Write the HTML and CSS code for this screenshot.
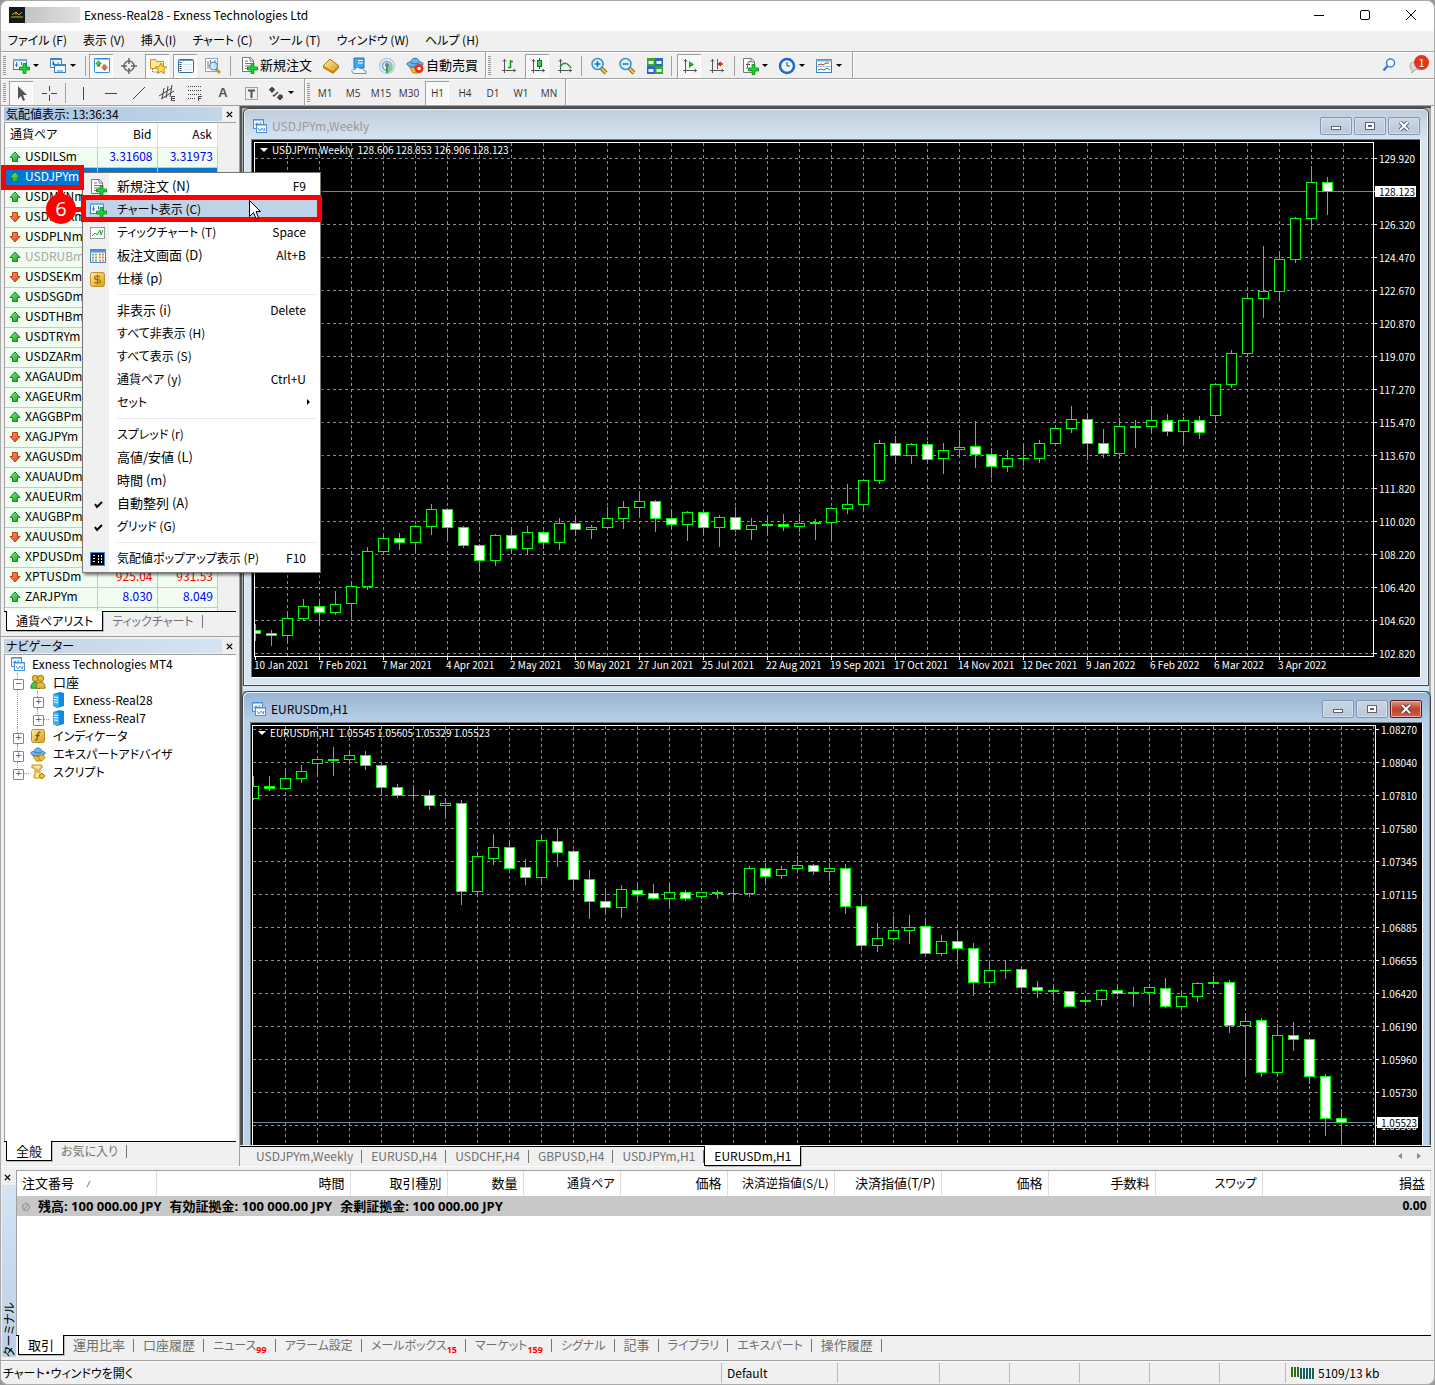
FILE: index.html
```html
<!DOCTYPE html>
<html lang="ja">
<head>
<meta charset="utf-8">
<title>Exness-Real28 - Exness Technologies Ltd</title>
<link rel="stylesheet" href="styles.css">
</head>
<body>
<svg class="defs" aria-hidden="true">
  <defs>
    <linearGradient id="gUp" x1="0" y1="0" x2="1" y2="1"><stop offset="0" stop-color="#8cf08c"/><stop offset="1" stop-color="#0a9a1c"/></linearGradient>
    <linearGradient id="gDown" x1="0" y1="0" x2="1" y2="1"><stop offset="0" stop-color="#ffa277"/><stop offset="1" stop-color="#d63a08"/></linearGradient>
    <linearGradient id="gGold" x1="0" y1="0" x2="1" y2="1"><stop offset="0" stop-color="#fff0a8"/><stop offset="1" stop-color="#d99a12"/></linearGradient>
    <symbol id="up" viewBox="0 0 12 12"><path d="M6 1 11 6.500H8.500V10.500H3.500V6.500H1Z" fill="url(#gUp)" stroke="#16862a"/></symbol>
    <symbol id="down" viewBox="0 0 12 12"><path d="M6 11 11 5.500H8.500V1.500H3.500V5.500H1Z" fill="url(#gDown)" stroke="#b8400f"/></symbol>
    <symbol id="plus" viewBox="0 0 12 12"><path d="M4.500.5h3v4h4v3h-4v4h-3v-4h-4v-3h4Z" fill="#19d832" stroke="#0a8a1a"/></symbol>
    <symbol id="charts" viewBox="0 0 16 16"><rect x="1.500" y="1.500" width="10" height="9" fill="#e8f4ff" stroke="#4a90d9"/><path d="M1 2h11M3 7l2-2 2 2 2-3" stroke="#4a90d9" fill="none"/><rect x="4.500" y="6.500" width="10" height="8" fill="#fff" stroke="#4a90d9"/><path d="M4 7h11M6 10l2 3 2-3 2 3 1-3" stroke="#4a90d9" fill="none"/></symbol>
    <symbol id="newchart" viewBox="0 0 18 18"><rect x="1.500" y="2.500" width="13" height="10" fill="#eef7ff" stroke="#3d83bd"/><path d="M1 3h14" stroke="#69b2e6" stroke-width="2"/><path d="M4.500 5v5M3 8h3M9.500 5v3" stroke="#47749b"/><use href="#plus" x="7" y="6" width="11" height="11"/></symbol>
    <symbol id="doc" viewBox="0 0 18 18"><path d="M2.500 1.500h8l3 3v11h-11Z" fill="#fff" stroke="#777"/><path d="M10 1.500v3.500h3.500M5 5h3M5 7.500h6M5 10h6M5 12.500h3" stroke="#777" fill="none"/><use href="#plus" x="7" y="7" width="11" height="11"/></symbol>
    <symbol id="fdoc" viewBox="0 0 18 18"><path d="M2.500 1.500h8l3 3v11h-11Z" fill="#fff" stroke="#777"/><path d="M10 1.500v3.500h3.500" stroke="#777" fill="none"/><path d="M9.500 4.500Q7.500 4 7 6l-1 6M5 7.500h4" stroke="#555" fill="none"/><use href="#plus" x="7" y="7" width="11" height="11"/></symbol>
    <symbol id="axes" viewBox="0 0 18 18"><path d="M4.500 2v14M2 13.500h14M3 4.500l1.500-2L6 4.500M13.500 12l2 1.500-2 1.500" stroke="#555" fill="none"/></symbol>
    <symbol id="server" viewBox="0 0 14 16"><path d="M2 2 9 0l4 1v13l-7 2-4-2Z" fill="#1688dc"/><path d="M2 2 8 3v13l-6-2Z" fill="#39b2f7"/><path d="M3 5l4 .5M3 7.500l4 .5M3 10l4 .5" stroke="#fff"/></symbol>
    <symbol id="hat" viewBox="0 0 18 18"><path d="M3 10q6 4 12 0l-3 7H7Z" fill="#f1be37" stroke="#b88012"/><path d="M1 8c0-2 3-2 4-2 0-5 8-5 8 0 1 0 4 0 4 2s-4 3-8 3-8-1-8-3Z" fill="#69b7ec" stroke="#2a75b5"/><path d="M5 7q4 2 8 0" stroke="#2a75b5" fill="none"/></symbol>
    <symbol id="expert" viewBox="0 0 18 18"><use href="#hat"/><path d="m13 9 4 4-4 4-4-4Z" fill="#f3bf2a" stroke="#a97707"/></symbol>
    <symbol id="scroll" viewBox="0 0 16 16"><path d="M2 1h10v3h-2v7h3v3H4v-3h1V4H2Z" fill="#ffe58b" stroke="#be9020"/><path d="M6 6h3M6 8h3" stroke="#be9020"/><path d="m12 9 3 3-3 3-3-3Z" fill="#f3bf2a" stroke="#a97707"/></symbol>
    <symbol id="lens" viewBox="0 0 18 18"><path d="m11 11 5 5" stroke="#8b6814" stroke-width="4"/><path d="m11 11 5 5" stroke="#f3cd45" stroke-width="2"/><circle cx="7.500" cy="7" r="5.500" fill="#d9f3ff" stroke="#3890cc" stroke-width="1.500"/></symbol>
    <symbol id="x" viewBox="0 0 8 8"><path d="m1 1 6 6M7 1 1 7" stroke="#000" stroke-width="1.600"/></symbol>
    <pattern id="vgrid" x="32" y="0" width="32" height="6" patternUnits="userSpaceOnUse"><rect width="1" height="3" fill="#8090a0"/></pattern>
    <pattern id="hgrid1" x="0" y="15" width="6" height="33" patternUnits="userSpaceOnUse"><rect width="3" height="1" fill="#8090a0"/></pattern>
    <pattern id="hgrid2" x="0" y="3" width="6" height="33" patternUnits="userSpaceOnUse"><rect width="3" height="1" fill="#8090a0"/></pattern>
  </defs>
</svg>

<div class="app">
  <header class="titlebar">
    <svg class="logo" viewBox="0 0 16 16"><rect width="16" height="16" fill="#171a1c"/><path d="M2 10h12M3 8q2-3 4-2M7 8V5l3 3 3-3" stroke="#d8a928" fill="none"/></svg>
    <span class="masked"></span>
    <h1>Exness-Real28 - Exness Technologies Ltd</h1>
    <div class="win-ctl">
      <button aria-label="最小化"><svg viewBox="0 0 12 12"><path d="M1 6.500h10" stroke="#000"/></svg></button>
      <button aria-label="最大化"><svg viewBox="0 0 12 12"><rect x="1.500" y="1.500" width="9" height="9" rx="1.500" fill="none" stroke="#000"/></svg></button>
      <button aria-label="閉じる"><svg viewBox="0 0 12 12"><path d="m1 1 10 10M11 1 1 11" stroke="#000"/></svg></button>
    </div>
  </header>

  <nav class="menubar">
    <button>ファイル (F)</button><button>表示 (V)</button><button>挿入(I)</button><button>チャート (C)</button><button>ツール (T)</button><button>ウィンドウ (W)</button><button>ヘルプ (H)</button>
  </nav>

  <div class="toolbar tb-main">
    <div class="band">
      <i class="grip"></i>
      <button class="drop" aria-label="新規チャート"><svg class="ic"><use href="#newchart"/></svg></button>
      <button class="drop" aria-label="チャート組表示"><svg class="ic" viewBox="0 0 18 18"><path d="M1.500 1.500h11v9h-11Z" fill="#eef7ff" stroke="#3d83bd"/><path d="M1 2.500h12M4 4v4h2M9 5v3" stroke="#3d83bd"/><rect x="5.500" y="7.500" width="11" height="8" fill="#eef7ff" stroke="#3d83bd"/><path d="M5 8.500h12M8 14h6" stroke="#3d83bd"/></svg></button>
      <i class="sep tight"></i>
      <button class="tool on" aria-label="気配値表示"><svg class="ic" viewBox="0 0 18 18"><rect x="1.500" y="1.500" width="15" height="14" rx="1" fill="#fff" stroke="#2d8de0"/><path d="M1 2h16" stroke="#2d8de0"/><use href="#up" x="2" y="3" width="7" height="7"/><use href="#down" x="8" y="7" width="7" height="7"/></svg></button>
      <button class="tool" aria-label="データウィンドウ"><svg class="ic" viewBox="0 0 18 18"><circle cx="9" cy="9" r="5" fill="none" stroke="#666" stroke-width="1.500"/><path d="M9 1v6M9 11v6M1 9h6M11 9h6" stroke="#666" stroke-width="1.500"/></svg></button>
      <button class="tool on" aria-label="ナビゲーター"><svg class="ic" viewBox="0 0 18 18"><path d="M1.500 2.500h5l1 2h7v7h-13Z" fill="#ffe89a" stroke="#c99a23"/><path d="M3.500 12v3h6" stroke="#666" stroke-dasharray="1 1" fill="none"/><path d="m12 6 1.700 3.600 3.900.4-2.900 2.600.8 3.900-3.500-2-3.500 2 .8-3.900L6.400 10l3.900-.4Z" fill="#ffdb4d" stroke="#b98b14"/></svg></button>
      <button class="tool on" aria-label="ターミナル"><svg class="ic" viewBox="0 0 18 18"><rect x="1.500" y="2.500" width="15" height="13" rx="1" fill="#fff" stroke="#246fb5"/><path d="M1 3.500h16" stroke="#58a3df"/><path d="M3.500 5v9" stroke="#333" stroke-width="2" stroke-dasharray="1 1"/><path d="M6 7.500h9M6 10h9M6 12.500h9" stroke="#cfe2f3"/></svg></button>
      <button class="tool" aria-label="ストラテジーテスター"><svg class="ic" viewBox="0 0 18 18"><rect x="1.500" y="1.500" width="12" height="13" fill="#fff" stroke="#7fa8cb"/><path d="M4 4v8M6.500 3v6M11 3v7" stroke="#777"/><path d="m12 12 4 4" stroke="#c99a23" stroke-width="3"/><circle cx="9.500" cy="9" r="4" fill="#bfe6fa" fill-opacity=".8" stroke="#3f7fb4"/></svg></button>
      <i class="sep wide"></i>
      <button class="text-tool kj"><svg class="ic"><use href="#doc"/></svg>新規注文</button>
      <button class="tool" aria-label="メタエディター"><svg class="ic" viewBox="0 0 18 18"><path d="M1 9 8 2l9 7-6 6Z" fill="url(#gGold)" stroke="#a8730f"/><path d="m1 9 10 6 6-6v2l-6 6L1 11Z" fill="#c8860c"/></svg></button>
      <button class="tool" aria-label="クラウド"><svg class="ic" viewBox="0 0 18 18"><path d="M4 1h10v10H4Z" fill="#3aaef2" stroke="#1478bd"/><path d="M8 3h5v1H8ZM8 5.500h5v1H8Z" fill="#fff"/><path d="M4 16.500q-3-1-2-3 1-2 3-1 2-4 5-1 4-1 4 2 3 0 2 3Z" fill="#f1f6fb" stroke="#6d8fae"/></svg></button>
      <button class="tool" aria-label="シグナル"><svg class="ic" viewBox="0 0 18 18"><circle cx="9" cy="9" r="7.500" fill="none" stroke="#b5cfe3" stroke-width="1.500"/><circle cx="9" cy="9" r="4.500" fill="none" stroke="#7fa4c2" stroke-width="1.500"/><path d="M9 9q5-4 6 0 0 6-6 7Z" fill="#8fc98f"/><circle cx="9" cy="8" r="2" fill="#3f84bd"/><path d="M9 8v8" stroke="#3f9b4f" stroke-width="2"/></svg></button>
      <button class="text-tool kj"><svg class="ic" viewBox="0 0 18 18"><use href="#hat"/><circle cx="13" cy="12.500" r="4.500" fill="#e33318"/><rect x="11.500" y="11" width="3" height="3" fill="#fff"/></svg>自動売買</button>
    </div>
    <div class="band">
      <i class="grip"></i>
      <button class="tool" aria-label="バーチャート"><svg class="ic" viewBox="0 0 18 18"><use href="#axes"/><path d="M10.500 3v8M8 10.500h2.500M10.500 4.500H13" stroke="#0a9a1c" stroke-width="1.500"/></svg></button>
      <button class="tool on" aria-label="ローソク足"><svg class="ic" viewBox="0 0 18 18"><use href="#axes"/><path d="M10.500 1v11" stroke="#087a14"/><rect x="8.500" y="3.500" width="4" height="6" fill="#2fd648" stroke="#087a14"/></svg></button>
      <button class="tool" aria-label="ラインチャート"><svg class="ic" viewBox="0 0 18 18"><use href="#axes"/><path d="M4 10q5-8 11 1" stroke="#2a9a38" stroke-width="1.500" fill="none"/></svg></button>
      <i class="sep"></i>
      <button class="tool" aria-label="拡大"><svg class="ic" viewBox="0 0 18 18"><use href="#lens"/><path d="M4.500 7h6M7.500 4v6" stroke="#2270ab" stroke-width="1.500"/></svg></button>
      <button class="tool" aria-label="縮小"><svg class="ic" viewBox="0 0 18 18"><use href="#lens"/><path d="M4.500 7h6" stroke="#2270ab" stroke-width="1.500"/></svg></button>
      <button class="tool" aria-label="整列"><svg class="ic" viewBox="0 0 18 18"><path d="M1 1h8v8H1ZM9 9h8v8H9Z" fill="#3aa62a"/><path d="M9 1h8v8H9ZM1 9h8v8H1Z" fill="#2a66c8"/><path d="M2.500 4h5v3h-5ZM10.500 4h5v3h-5ZM2.500 12h5v3h-5ZM10.500 12h5v3h-5Z" fill="#e8f3ff"/></svg></button>
      <i class="sep"></i>
      <button class="tool on" aria-label="自動スクロール"><svg class="ic" viewBox="0 0 18 18"><use href="#axes"/><path d="m8 4 5 3.500L8 11Z" fill="#0fae26"/></svg></button>
      <button class="tool" aria-label="チャートシフト"><svg class="ic" viewBox="0 0 18 18"><use href="#axes"/><path d="M9.500 2v10" stroke="#246aa8"/><path d="M15 7h-4M13 5l-2.500 2L13 9" stroke="#b8320e" stroke-width="1.500" fill="none"/></svg></button>
      <i class="sep wide"></i>
      <button class="drop" aria-label="インディケータ"><svg class="ic"><use href="#fdoc"/></svg></button>
      <button class="drop" aria-label="時間軸"><svg class="ic" viewBox="0 0 18 18"><circle cx="9" cy="9" r="7" fill="#eef6ff" stroke="#1c6bc0" stroke-width="2.500"/><path d="M9 5v4h3" stroke="#345" fill="none"/></svg></button>
      <button class="drop" aria-label="テンプレート"><svg class="ic" viewBox="0 0 18 18"><rect x="1.500" y="2.500" width="15" height="13" fill="#fff" stroke="#3d83bd"/><path d="M1 3.500h16" stroke="#69aee2" stroke-width="2"/><path d="m3 8 3-1 2 1 3-2 3 0" stroke="#a8320e" fill="none"/><path d="M2 9.500h14" stroke="#9cc3e2"/><path d="m3 13 3-1 3 1 3-2 3 2" stroke="#1b9a2c" fill="none"/></svg></button>
    </div>
    <div class="tb-right">
      <button class="tool" aria-label="検索"><svg class="ic" viewBox="0 0 18 18"><circle cx="10.500" cy="7" r="4" fill="#fff" stroke="#3b7ad0" stroke-width="1.500"/><path d="m7.500 10-4 4.500" stroke="#3b7ad0" stroke-width="2.500"/></svg></button>
      <button class="tool chat" aria-label="通知"><svg class="ic" viewBox="0 0 18 18"><path d="M2 9q0-3 5-3t6 3-6 5l-3 3v-3q-2-1-2-5Z" fill="#d8d8d8" stroke="#a5a5a5"/></svg><b>1</b></button>
    </div>
  </div>

  <div class="toolbar tb-draw">
    <div class="band">
      <i class="grip"></i>
      <button class="tool on" aria-label="カーソル"><svg class="ic" viewBox="0 0 18 18"><path d="M5 2v13l3-3 2 5 2-1-2-5h4Z" fill="#555"/></svg></button>
      <button class="tool" aria-label="クロスヘア"><svg class="ic" viewBox="0 0 18 18"><path d="M9.500 2v5M9.500 11v6M2 9.500h5M11 9.500h6" stroke="#444"/></svg></button>
      <i class="sep"></i>
      <button class="tool" aria-label="垂直線"><svg class="ic" viewBox="0 0 18 18"><path d="M9.500 3v13" stroke="#444"/></svg></button>
      <button class="tool" aria-label="水平線"><svg class="ic" viewBox="0 0 18 18"><path d="M3 9.500h12" stroke="#444"/></svg></button>
      <button class="tool" aria-label="トレンドライン"><svg class="ic" viewBox="0 0 18 18"><path d="M3 15 15 3" stroke="#444"/></svg></button>
      <button class="tool" aria-label="チャネル"><svg class="ic" viewBox="0 0 18 18"><path d="m1 12 13-8M3 15l13-8M6 4 4 15M10 2 8 14M14 1l-2 12" stroke="#444"/><path d="M17 12.500h-3.500v4H17M14 14.500h3" stroke="#444" fill="none"/></svg></button>
      <button class="tool" aria-label="フィボナッチ"><svg class="ic" viewBox="0 0 18 18"><path d="M2 2.500h13M2 6.500h13M2 10.500h13M2 14.500h8" stroke="#444" stroke-dasharray="1 1"/><path d="M12.500 17v-4.500H16M12 14.500h3" stroke="#444" fill="none"/></svg></button>
      <button class="tool glyph" aria-label="テキスト">A</button>
      <button class="tool" aria-label="ラベル"><svg class="ic" viewBox="0 0 18 18"><rect x="3.500" y="3.500" width="12" height="12" fill="none" stroke="#555" stroke-dasharray="1 1"/><path d="M6 6.500h7M9.500 6v8" stroke="#555" stroke-width="2"/></svg></button>
      <button class="drop" aria-label="矢印"><svg class="ic" viewBox="0 0 18 18"><path d="m5 3 3 3H6v2H4V6H2ZM13 16l-3-3h2v-2h3v2h1Z" fill="#444" stroke="#444"/><path d="m6 11 1 1 4-4" stroke="#444" stroke-width="1.500" fill="none"/></svg></button>
    </div>
    <div class="band periods">
      <i class="grip"></i>
      <button class="tool">M1</button><button class="tool">M5</button><button class="tool">M15</button><button class="tool">M30</button><button class="tool on">H1</button><button class="tool">H4</button><button class="tool">D1</button><button class="tool">W1</button><button class="tool">MN</button>
    </div>
  </div>

  <main class="work">
    <aside class="side">
      <section class="panel watch">
        <div class="panel-head"><h2>気配値表示: 13:36:34</h2><button aria-label="閉じる"><svg><use href="#x"/></svg></button></div>
        <div class="watch-body">
          <table class="quotes">
            <thead><tr><th>通貨ペア</th><th>Bid</th><th>Ask</th></tr></thead>
            <tbody>
              <tr><td><svg><use href="#up"/></svg>USDILSm</td><td>3.31608</td><td>3.31973</td></tr>
              <tr class="sel"><td><svg><use href="#up"/></svg>USDJPYm</td><td></td><td></td></tr>
              <tr><td><svg><use href="#up"/></svg>USDMXNm</td><td></td><td></td></tr>
              <tr><td><svg><use href="#down"/></svg>USDNOKm</td><td></td><td></td></tr>
              <tr><td><svg><use href="#down"/></svg>USDPLNm</td><td></td><td></td></tr>
              <tr class="dim"><td><svg><use href="#up"/></svg>USDRUBm</td><td></td><td></td></tr>
              <tr><td><svg><use href="#down"/></svg>USDSEKm</td><td></td><td></td></tr>
              <tr><td><svg><use href="#up"/></svg>USDSGDm</td><td></td><td></td></tr>
              <tr><td><svg><use href="#up"/></svg>USDTHBm</td><td></td><td></td></tr>
              <tr><td><svg><use href="#up"/></svg>USDTRYm</td><td></td><td></td></tr>
              <tr><td><svg><use href="#up"/></svg>USDZARm</td><td></td><td></td></tr>
              <tr><td><svg><use href="#up"/></svg>XAGAUDm</td><td></td><td></td></tr>
              <tr><td><svg><use href="#up"/></svg>XAGEURm</td><td></td><td></td></tr>
              <tr><td><svg><use href="#up"/></svg>XAGGBPm</td><td></td><td></td></tr>
              <tr><td><svg><use href="#down"/></svg>XAGJPYm</td><td></td><td></td></tr>
              <tr><td><svg><use href="#down"/></svg>XAGUSDm</td><td></td><td></td></tr>
              <tr><td><svg><use href="#up"/></svg>XAUAUDm</td><td></td><td></td></tr>
              <tr><td><svg><use href="#up"/></svg>XAUEURm</td><td></td><td></td></tr>
              <tr><td><svg><use href="#up"/></svg>XAUGBPm</td><td></td><td></td></tr>
              <tr><td><svg><use href="#down"/></svg>XAUUSDm</td><td></td><td></td></tr>
              <tr><td><svg><use href="#up"/></svg>XPDUSDm</td><td></td><td></td></tr>
              <tr class="fall"><td><svg><use href="#down"/></svg>XPTUSDm</td><td>925.04</td><td>931.53</td></tr>
              <tr><td><svg><use href="#up"/></svg>ZARJPYm</td><td>8.030</td><td>8.049</td></tr>
              <tr><td></td><td></td><td></td></tr>
            </tbody>
          </table>
        </div>
        <div class="tabs"><button class="cur">通貨ペアリスト</button><button>ティックチャート</button></div>
      </section>
      <section class="panel navi">
        <div class="panel-head"><h2>ナビゲーター</h2><button aria-label="閉じる"><svg><use href="#x"/></svg></button></div>
        <ul class="tree">
          <li class="root"><svg class="ti"><use href="#charts"/></svg>Exness Technologies MT4
            <ul>
              <li class="open"><svg class="ti" viewBox="0 0 18 18"><circle cx="6" cy="5" r="3.500" fill="#e7b93b" stroke="#8d6a10"/><circle cx="12" cy="5" r="3.500" fill="#e7b93b" stroke="#8d6a10"/><path d="M1 16q0-7 5-7t5 7Z" fill="#3fca43" stroke="#19831f"/><path d="M7 16q0-7 5-7t5 7Z" fill="#e7b93b" stroke="#8d6a10"/></svg><span class="kj">口座</span>
                <ul>
                  <li><svg class="ti"><use href="#server"/></svg>Exness-Real28</li>
                  <li><svg class="ti"><use href="#server"/></svg>Exness-Real7</li>
                </ul>
              </li>
              <li><svg class="ti" viewBox="0 0 16 16"><rect x="1.500" y="1.500" width="13" height="13" rx="2" fill="url(#gGold)" stroke="#c38f1c"/><path d="M10.500 4.500Q8.500 3.500 8 6L7 11q-.5 1.500-2 1M5.500 7.500h4" stroke="#7a5600" stroke-width="1.300" fill="none"/></svg>インディケータ</li>
              <li><svg class="ti"><use href="#expert"/></svg>エキスパートアドバイザ</li>
              <li><svg class="ti"><use href="#scroll"/></svg>スクリプト</li>
            </ul>
          </li>
        </ul>
        <div class="tabs"><button class="cur kj">全般</button><button>お気に入り</button></div>
      </section>
    </aside>

    <div class="mdi">
      <div class="mdi-area">
        <section class="win w-weekly">
          <div class="win-head"><svg class="ti"><use href="#charts"/></svg><h2>USDJPYm,Weekly</h2>
            <div class="caps"><button aria-label="最小化"><i class="c-min"></i></button><button aria-label="最大化"><i class="c-max"></i></button><button aria-label="閉じる"><svg viewBox="0 0 12 10"><path d="m2 1 8 8M10 1 2 9" stroke="#5a6270" stroke-width="4"/><path d="m2 1 8 8M10 1 2 9" stroke="#fff" stroke-width="2"/></svg></button></div>
          </div>
          <div class="chart">
            <div class="plot"><svg id="weekly"></svg><p class="info"><i></i>USDJPYm,Weekly&nbsp; 128.606 128.853 126.906 128.123</p></div>
            <ol class="prices">
              <li>129.920</li><li class="now">128.123</li><li>126.320</li><li>124.470</li><li>122.670</li><li>120.870</li><li>119.070</li><li>117.270</li><li>115.470</li><li>113.670</li><li>111.820</li><li>110.020</li><li>108.220</li><li>106.420</li><li>104.620</li><li>102.820</li>
            </ol>
            <ol class="dates">
              <li>10 Jan 2021</li><li>7 Feb 2021</li><li>7 Mar 2021</li><li>4 Apr 2021</li><li>2 May 2021</li><li>30 May 2021</li><li>27 Jun 2021</li><li>25 Jul 2021</li><li>22 Aug 2021</li><li>19 Sep 2021</li><li>17 Oct 2021</li><li>14 Nov 2021</li><li>12 Dec 2021</li><li>9 Jan 2022</li><li>6 Feb 2022</li><li>6 Mar 2022</li><li>3 Apr 2022</li>
            </ol>
          </div>
        </section>
        <section class="win w-hourly">
          <div class="win-head"><svg class="ti"><use href="#charts"/></svg><h2>EURUSDm,H1</h2>
            <div class="caps"><button aria-label="最小化"><i class="c-min"></i></button><button aria-label="最大化"><i class="c-max"></i></button><button class="close" aria-label="閉じる"><svg viewBox="0 0 12 10"><path d="m2 1 8 8M10 1 2 9" stroke="#5a3a40" stroke-width="4"/><path d="m2 1 8 8M10 1 2 9" stroke="#fff" stroke-width="2"/></svg></button></div>
          </div>
          <div class="chart">
            <div class="plot"><svg id="hourly"></svg><p class="info"><i></i>EURUSDm,H1&nbsp; 1.05545 1.05605 1.05329 1.05523</p></div>
            <ol class="prices">
              <li>1.08270</li><li>1.08040</li><li>1.07810</li><li>1.07580</li><li>1.07345</li><li>1.07115</li><li>1.06885</li><li>1.06655</li><li>1.06420</li><li>1.06190</li><li>1.05960</li><li>1.05730</li><li>1.05500<b class="bid">1.05523</b></li>
            </ol>
          </div>
        </section>
      </div>
      <div class="tabs mdi-tabs">
        <button>USDJPYm,Weekly</button><button>EURUSD,H4</button><button>USDCHF,H4</button><button>GBPUSD,H4</button><button>USDJPYm,H1</button><button class="cur">EURUSDm,H1</button>
        <span class="arrows"><button aria-label="前へ"><svg viewBox="0 0 4 6"><path d="M4 0v6L0 3Z" fill="#888"/></svg></button><button aria-label="次へ"><svg viewBox="0 0 4 6"><path d="M0 0v6l4-3Z" fill="#888"/></svg></button></span>
      </div>
    </div>
  </main>

  <section class="terminal">
    <div class="strip"><button aria-label="閉じる"><svg><use href="#x"/></svg></button><h2>ターミナル</h2></div>
    <div class="term-main">
      <div class="term-body">
        <table class="orders">
          <colgroup><col class="k139"><col class="k194"><col class="k97"><col class="k76"><col class="k97"><col class="k107"><col class="k107"><col class="k107"><col class="k107"><col class="k107"><col class="k107"><col></colgroup>
          <thead><tr><th class="kj">注文番号<svg class="sort" viewBox="0 0 6 8"><path d="M1 7 4 1" stroke="#777"/></svg></th><th class="kj">時間</th><th class="kj">取引種別</th><th class="kj">数量</th><th>通貨ペア</th><th class="kj">価格</th><th>決済逆指値(S/L)</th><th class="kj">決済指値(T/P)</th><th class="kj">価格</th><th class="kj">手数料</th><th>スワップ</th><th class="kj">損益</th></tr></thead>
          <tbody><tr><td colspan="11"><svg class="bal" viewBox="0 0 10 10"><circle cx="5" cy="5" r="3.500" fill="none" stroke="#888"/><path d="m3 7 4-4" stroke="#888"/></svg><span>残高: 100 000.00 JPY</span><span>有効証拠金: 100 000.00 JPY</span><span>余剰証拠金: 100 000.00 JPY</span></td><td class="sum">0.00</td></tr></tbody>
        </table>
      </div>
      <div class="tabs"><button class="cur kj">取引</button><button class="kj">運用比率</button><button class="kj">口座履歴</button><button>ニュース<sub>99</sub></button><button>アラーム設定</button><button>メールボックス<sub>15</sub></button><button>マーケット<sub>159</sub></button><button>シグナル</button><button class="kj">記事</button><button>ライブラリ</button><button>エキスパート</button><button class="kj">操作履歴</button></div>
    </div>
  </section>

  <footer class="status">
    <span class="grow">チャート・ウィンドウを開く</span><span class="s116">Default</span><span class="s102"></span><span class="s70"></span><span class="s70"></span><span class="s70"></span><span class="s70"></span><span class="s66"></span>
    <span class="net"><svg viewBox="0 0 24 12"><path d="M1 0v10M4 0v10M7 0v10" stroke="#2f6b1a" stroke-width="2"/><path d="M10 1v11M13 1v11M16 1v11M19 1v11M22 1v11" stroke="#1a5f5f" stroke-width="2"/></svg>5109/13 kb</span>
  </footer>

  <menu class="context">
    <li><button class="kj"><svg class="ic"><use href="#doc"/></svg><span>新規注文 (N)</span><kbd>F9</kbd></button></li>
    <li><button class="hot"><svg class="ic"><use href="#newchart"/></svg><span>チャート表示 (C)</span></button></li>
    <li><button><svg class="ic" viewBox="0 0 18 18"><rect x="1.500" y="3.500" width="14" height="11" fill="#fff" stroke="#999"/><path d="m3 12 3-3 2 2 3-5 1 5 2-5" stroke="#2a9a38" fill="none"/></svg><span>ティックチャート (T)</span><kbd>Space</kbd></button></li>
    <li><button class="kj"><svg class="ic" viewBox="0 0 18 18"><rect x="1.500" y="2.500" width="15" height="13" fill="#fff" stroke="#4285c6"/><path d="M1 4h16" stroke="#4a94dd" stroke-width="3"/><path d="M3 7.500h6M3 10.500h6M3 13.500h6" stroke="#7fb55e" stroke-width="2" stroke-dasharray="2 1"/><path d="M10 7.500h6M10 10.500h6M10 13.500h6" stroke="#e0885a" stroke-width="2" stroke-dasharray="2 1"/></svg><span>板注文画面 (D)</span><kbd>Alt+B</kbd></button></li>
    <li><button class="kj"><svg class="ic" viewBox="0 0 18 18"><rect x="1.500" y="2.500" width="14" height="14" rx="2" fill="url(#gGold)" stroke="#c38f1c"/><path d="M11 7q-1-1-3-1-2.500 0-2.500 1.700T8.500 9.500 11.300 11.300 8.500 13 5.500 12M8.500 4.500v10" stroke="#9a6b00" stroke-width="1.200" fill="none"/></svg><span>仕様 (p)</span></button></li>
    <li class="rule"></li>
    <li><button class="kj"><span>非表示 (i)</span><kbd>Delete</kbd></button></li>
    <li><button><span>すべて非表示 (H)</span></button></li>
    <li><button><span>すべて表示 (S)</span></button></li>
    <li><button><span>通貨ペア (y)</span><kbd>Ctrl+U</kbd></button></li>
    <li><button class="sub"><span>セット</span></button></li>
    <li class="rule"></li>
    <li><button><span>スプレッド (r)</span></button></li>
    <li><button class="kj"><span>高値/安値 (L)</span></button></li>
    <li><button class="kj"><span>時間 (m)</span></button></li>
    <li><button class="kj"><svg class="ic" viewBox="0 0 18 18"><path d="m6 9 2 3 5-5" stroke="#000" stroke-width="2" fill="none"/></svg><span>自動整列 (A)</span></button></li>
    <li><button><svg class="ic" viewBox="0 0 18 18"><path d="m6 9 2 3 5-5" stroke="#000" stroke-width="2" fill="none"/></svg><span>グリッド (G)</span></button></li>
    <li class="rule"></li>
    <li><button><svg class="ic" viewBox="0 0 18 18"><rect x="1.500" y="2.500" width="14" height="13" fill="#000" stroke="#4285c6"/><path d="M4 5.500h3M4 8.500h2M4 11.500h3M9.500 5v8M12.500 5v8" stroke="#fff" stroke-dasharray="2 1"/></svg><span>気配値ポップアップ表示 (P)</span><kbd>F10</kbd></button></li>
  </menu>
  <i class="mark mark-row"></i>
  <i class="mark mark-item"></i>
  <i class="mark mark-stem"></i>
  <b class="step">6</b>
  <svg class="pointer" viewBox="0 0 12 20"><path d="M.5.500v16l4-4 2.500 6 2.500-1-2.500-6h4.500Z" fill="#fff" stroke="#000"/></svg>
</div>
<script src="charts.js"></script>
</body>
</html>
```
FILE: styles.css
```css
* { box-sizing: border-box; }
body { margin: 0; background: #999; color: #000; font: 12px/16px "Noto Sans CJK JP", sans-serif; font-feature-settings: "palt"; }
button { font: inherit; font-feature-settings: inherit; color: inherit; background: none; border: 0; padding: 0; margin: 0; white-space: nowrap; }
h1, h2, p, ul, ol, menu { margin: 0; padding: 0; font-size: inherit; font-weight: 400; list-style: none; }
i, kbd { font: inherit; }
svg { display: block; flex: none; }
.defs { position: absolute; width: 0; height: 0; }
.kj { font-size: 13px; }
.ic { width: 18px; height: 18px; }
.ti { width: 16px; height: 16px; }

.app { position: relative; display: flex; flex-direction: column; height: 100vh; min-height: 1100px; background: #f0f0f0; border: 1px solid #aaa; border-radius: 8px; overflow: hidden; }

.titlebar { display: flex; align-items: center; height: 30px; padding: 0 0 2px 8px; background: #fff; }
.logo { width: 16px; height: 16px; }
.masked { width: 55px; height: 16px; margin-right: 4px; background: linear-gradient(100deg, #c2c4c4, #dfe0e0); }
.win-ctl { display: flex; margin-left: auto; }
.win-ctl button { width: 46px; height: 28px; display: grid; place-items: center; }
.win-ctl svg { width: 12px; height: 12px; }

.menubar { display: flex; gap: 16px; height: 20px; padding: 0 7px; line-height: 18px; }
.menubar button { height: 18px; }

.toolbar { display: flex; height: 27px; border-top: 1px solid #a0a0a0; box-shadow: inset 0 1px #fff; }
.tb-draw { height: 28px; border-bottom: 1px solid #a0a0a0; }
.band { display: flex; align-items: center; padding: 1px 2px 0 2px; border-right: 1px solid #a0a0a0; box-shadow: 1px 0 #fff; }
.grip { width: 3px; height: 20px; margin-right: 4px; background: repeating-linear-gradient(#999 0 1px, #f0f0f0 1px 2px); }
.tb-draw .grip { margin-right: 1px; }
.sep { width: 1px; height: 20px; margin: 0 3px 0 2px; background: #a0a0a0; }
.sep.tight { margin: 0 1px; }
.sep.wide { margin: 0 4px 0 3px; }
.tool { width: 28px; height: 24px; display: grid; place-items: center; }
.tool.on { background: #f8f8f8; border: solid #a0a0a0; border-width: 1px 0 0 1px; width: 24px; margin: 0 2px; box-shadow: inset -1px -1px #fff; }
.drop { display: flex; align-items: center; gap: 3px; width: 37px; height: 24px; padding-left: 2px; }
.drop::after { content: ""; border: 3px solid transparent; border-top-color: #000; border-bottom: 0; }
.text-tool { display: flex; align-items: center; height: 24px; padding: 0 5px 2px 5px; gap: 2px; }
.glyph { font: bold 13px "Liberation Sans", sans-serif; color: #555; }
.periods .tool { font: 10px "Open Sans", sans-serif; color: #333; }
.tb-right { display: flex; align-items: center; margin-left: auto; padding-right: 3px; }
.chat { position: relative; }
.chat b { position: absolute; right: 2px; top: 2px; width: 15px; height: 15px; border-radius: 8px; background: #e2361c; color: #fff; font-size: 11px; line-height: 14px; font-weight: 400; }

.work { display: flex; flex: 1; min-height: 0; }
.side { display: flex; flex-direction: column; width: 239px; border-right: 1px solid #a0a0a0; }
.panel { display: flex; flex-direction: column; padding: 0 3px; }
.watch { height: 531px; border-bottom: 1px solid #a0a0a0; }
.navi { flex: 1; min-height: 0; padding-top: 1px; padding-bottom: 3px; }
.panel-head { display: flex; align-items: center; height: 16px; }
.panel-head h2 { flex: 1; height: 14px; line-height: 13px; padding-left: 2px; background: linear-gradient(90deg, #a8c5e3, #c3d6e9); white-space: nowrap; }
.navi h2 { background: linear-gradient(90deg, #c3d3e2, #d5e4f2); }
.panel-head button { width: 14px; padding-left: 4px; }
.panel-head svg, .strip svg { width: 7px; height: 7px; }
.watch-body { flex: 1; min-height: 0; overflow: hidden; border: solid #a0a0a0; border-width: 1px 0 0 1px; }
.quotes { width: 213px; table-layout: fixed; border-collapse: collapse; background: #f1fdf1; }
.quotes th { height: 24px; padding: 0 5px 2px; background: #fff; font-weight: 400; text-align: right; border: solid #e0e0e0; border-width: 0 1px 1px 0; }
.quotes th:first-child { width: 92px; text-align: left; }
.quotes th:nth-child(2) { width: 60px; }
.quotes td { height: 20px; padding: 0 4px 2px 0; border: solid #c8c8c8; border-width: 0 1px 1px 0; text-align: right; color: #00f; white-space: nowrap; overflow: hidden; line-height: 16px; }
.quotes td:first-child { padding-left: 4px; text-align: left; color: #000; }
.quotes td svg { display: inline-block; width: 12px; height: 12px; margin-right: 4px; vertical-align: -2px; }
.quotes .sel td, .quotes .sel td:first-child { background: #0078d7; color: #fff; }
.quotes .dim td:first-child { color: #a8a8a8; }
.quotes .fall td:not(:first-child) { color: #f00; }

.tabs { display: flex; height: 22px; color: #707070; box-shadow: inset 0 1px #000; padding-left: 2px; }
.tabs button { position: relative; height: 20px; padding: 0 9px; line-height: 16px; }
.tabs button::after { content: ""; position: absolute; right: 0; top: 4px; width: 1px; height: 13px; background: #777; }
.tabs .cur { background: #fff; color: #000; border: solid #000; border-width: 0 1px 1px; box-shadow: 1px 1px #bbb; }
.tabs .cur::after { display: none; }
.tabs sub { color: #f00; font: bold 9px/9px "Open Sans", sans-serif; vertical-align: -3px; }
.watch .tabs { height: 25px; }
.watch .tabs button { line-height: 18px; }
.term-main .tabs { height: 25px; }

.tree { flex: 1; min-height: 0; overflow: hidden; background: #fff; border: solid #a0a0a0; border-width: 1px 0 0 1px; padding-left: 5px; line-height: 18px; }
.tree li { position: relative; }
.tree .ti { float: left; margin: 1px 6px 1px 0; }
.tree ul { clear: both; }
.tree ul .ti { margin-right: 7px; }
.tree ul li { padding-left: 20px; }
.tree ul li::before { content: "+"; position: absolute; left: 3px; top: 6px; width: 9px; height: 9px; border: 1px solid #848484; border-radius: 1px; background: #fff; color: #33589b; font: 9px/7px "DejaVu Sans", sans-serif; text-align: center; z-index: 1; }
.tree ul li.open::before { content: "−"; }
.tree ul li::after { content: ""; position: absolute; left: 7px; top: 0; width: 11px; height: 10px; border: dotted #999; border-width: 0 0 1px 1px; }
.tree ul > li:not(:last-child)::after { bottom: 0; height: auto; border-bottom: 0; }

.mdi { display: flex; flex-direction: column; flex: 1; min-width: 0; padding-right: 3px; }
.mdi-area { display: flex; flex-direction: column; flex: 1; min-height: 0; overflow: hidden; background: #ababab; border: solid #555; border-width: 2px 0 0 2px; }
.win { display: flex; flex-direction: column; border: 1px solid #444; border-radius: 6px 6px 0 0; min-height: 0; }
.w-weekly { flex: none; margin: 0 2px 5px 1px; padding: 0 8px 8px 7px; background: linear-gradient(#bfccd9, #d7e4f2 32px); box-shadow: 0 5px #d7e4f2, inset 0 0 0 1px #eef4fa; }
.w-hourly { flex: 1; border-bottom: 0; padding: 0 8px 0 7px; background: linear-gradient(#99b4d1, #b9d1ea 32px); box-shadow: inset -1px 0 #39bfe8, inset 1px 1px #e6f0fa; }
.win-head { display: flex; align-items: center; flex: none; height: 30px; padding: 4px 0 0 1px; gap: 4px; }
.w-weekly h2 { color: #9a9a9a; }
.caps { display: flex; gap: 2px; margin-left: auto; }
.caps button { width: 32px; height: 18px; display: grid; place-items: center; border: 1px solid #8294b0; border-radius: 2px; box-shadow: inset 0 0 0 1px #d5e0ec; background: linear-gradient(#c9d6e4, #b9c9da); }
.caps svg { width: 12px; height: 10px; }
.c-min { width: 10px; height: 4px; margin-top: 4px; background: #fff; border: 1px solid #5a6270; }
.c-max { width: 10px; height: 8px; background: #fff; border: 1px solid #5a6270; box-shadow: inset 0 0 0 2px #fff, inset 0 0 0 4px #5a6270; }
.caps .close { background: linear-gradient(#e09a8c, #c0402c 50%, #d06048); border-color: #5a1a20; box-shadow: inset 0 0 0 1px #e8b0a6; }

.chart { display: grid; grid-template-columns: 1fr 46px; flex: 1; min-height: 0; background: #000; color: #fff; border: solid #777; border-width: 1px 0 0 1px; padding: 2px 0 0 2px; box-shadow: 1px 1px #fff; font-size: 10px; }
.w-weekly .chart { grid-template-rows: 515px 20px; }
.w-hourly .chart { padding-left: 1px; }
.plot { position: relative; min-width: 0; overflow: hidden; border: solid #fff; border-width: 1px 1px 0; }
.plot svg { position: absolute; inset: 0; width: 100%; height: 100%; }
.w-weekly .plot { border-bottom-width: 1px; }
.info { position: absolute; left: 5px; top: 0; display: flex; align-items: center; gap: 4px; line-height: 14px; white-space: nowrap; }
.info i { border: 4px solid transparent; border-top-color: #fff; border-bottom: 0; }
.prices { grid-row: 1 / -1; grid-column: 2; }
.prices li { position: relative; height: 33px; line-height: 33px; padding-left: 5px; }
.prices li::before { content: ""; position: absolute; left: 0; top: 16px; width: 3px; height: 1px; background: #fff; }
.w-hourly .prices li:first-child { height: 21px; line-height: 9px; }
.w-hourly .prices li:first-child::before { top: 4px; }
.prices .now { color: #000; background: linear-gradient(#fff, #fff) 1px 11px / 41px 11px no-repeat; }
.bid { position: absolute; left: 1px; top: 8px; width: 41px; height: 11px; padding-left: 4px; line-height: 11px; font-weight: 400; background: #fff; color: #000; }
.dates { display: flex; grid-column: 1; min-width: 0; overflow: visible; line-height: 16px; }
.dates li { flex: none; width: 64px; white-space: nowrap; background: linear-gradient(#fff, #fff) 1px 0 / 1px 3px no-repeat; }

.mdi-tabs { height: 20px; margin-top: 1px; padding-left: 7px; }
.mdi-tabs button { line-height: 18px; }
.arrows { display: flex; margin-left: auto; }
.arrows button { padding: 0 5px; width: 19px; }
.arrows button::after { display: none; }
.arrows svg { width: 4px; height: 6px; }

.terminal { display: flex; flex: none; height: 194px; padding: 3px 3px 0 1px; border-top: 1px solid #fff; }
.strip { display: flex; flex-direction: column; width: 14px; padding-bottom: 3px; }
.strip button { height: 15px; padding-left: 2px; }
.strip h2 { flex: 1; writing-mode: vertical-rl; text-orientation: sideways; transform: rotate(180deg); line-height: 14px; background: linear-gradient(#bccfe3, #d4e4f3); }
.term-main { display: flex; flex-direction: column; flex: 1; min-width: 0; }
.term-body { flex: 1; background: #fff; border: solid #a0a0a0; border-width: 1px 0 0 1px; overflow: hidden; }
.orders { width: 100%; table-layout: fixed; border-collapse: collapse; }
.orders th { height: 25px; padding: 0 5px 2px; font-weight: 400; text-align: right; border-right: 1px solid #dedede; white-space: nowrap; }
.orders th:first-child { text-align: left; }
.sort { display: inline-block; width: 6px; height: 8px; margin-left: 12px; }
.orders td { height: 20px; padding: 0 4px; background: #c8c8c8; font: bold 13px/18px "Open Sans", "Noto Sans CJK JP", sans-serif; text-align: right; }
.orders td:first-child { text-align: left; }
.orders .sum { font-size: 12px; }
.orders span { margin-right: 8px; }
.bal { display: inline-block; width: 10px; height: 10px; margin-right: 7px; vertical-align: -1px; }
.k139 { width: 139px; } .k194 { width: 194px; } .k97 { width: 97px; } .k76 { width: 76px; } .k107 { width: 107px; }

.status { display: flex; align-items: center; flex: none; height: 24px; border-top: 1px solid #a0a0a0; box-shadow: inset 0 1px #fff; }
.status span { height: 20px; line-height: 20px; padding-left: 5px; border-left: 1px solid #bbb; }
.status .grow { flex: 1; padding-left: 2px; border-left: 0; }
.s116 { width: 116px; } .s102 { width: 102px; } .s70 { width: 70px; } .s66 { width: 66px; }
.status .net { display: flex; align-items: center; gap: 3px; width: 149px; }
.net svg { width: 24px; height: 12px; }

.context { position: absolute; left: 81px; top: 171px; width: 239px; padding: 2px 1px; border: 1px solid #777; background: linear-gradient(90deg, #f0f0f0 26px, #fff 26px); box-shadow: 2px 2px 3px #0008; }
.context button { display: flex; align-items: center; width: 100%; height: 23px; padding: 0 13px 2px 33px; text-align: left; }
.context .ic { margin: 2px 10px 0 -28px; }
.context kbd { margin-left: auto; font-size: 12px; }
.context .hot { background: #bfd3e8; }
.context .sub::after { content: ""; margin-left: auto; margin-right: -4px; border: 3px solid transparent; border-left-color: #000; border-right: 0; }
.context .rule { height: 9px; background: linear-gradient(#e8e8e8, #e8e8e8) 33px 4px / 200px 1px no-repeat; }

.mark { position: absolute; border: 5px solid #f00; }
.mark-row { left: 0; top: 164px; width: 83px; height: 25px; }
.mark-item { left: 80px; top: 194px; width: 241px; height: 27px; }
.mark-stem { left: 57px; top: 188px; width: 24px; height: 23px; border-width: 0 0 5px 5px; }
.step { position: absolute; left: 45px; top: 193px; width: 30px; height: 30px; border-radius: 15px; background: #f00; color: #fff; font: 20px/30px "Open Sans", sans-serif; text-align: center; }
.pointer { position: absolute; left: 248px; top: 199px; width: 12px; height: 20px; }
```
FILE: charts.js
```js
// One candle per entry, 16px apart: [high, top, bottom, low, kind], measured in pixels down the window.
// kind: 1 = bearish (filled white), 0 = bullish (hollow), 2 = doji.
const weekly = [
  [624,630,633,640,1],[630,633,635,645,1],[614,618,635,641,0],[599,606,618,620,0],[601,606,612,625,1],[591,604,612,614,0],[581,586,603,616,0],[547,551,586,589,0],
  [536,538,551,554,0],[533,538,542,549,1],[525,526,542,552,0],[504,509,526,534,0],[508,509,527,541,1],[526,527,545,547,1],[544,545,560,570,1],[534,535,560,565,0],
  [527,535,548,553,1],[526,532,548,553,0],[531,532,542,548,1],[518,523,542,549,0],[516,523,529,535,1],[525,527,529,538,0],[507,518,527,529,0],[501,507,518,528,0],
  [491,501,507,515,0],[500,501,518,531,1],[509,518,524,528,1],[511,512,524,540,0],[511,512,527,534,1],[515,517,527,546,0],[507,517,529,531,1],[518,525,529,539,0],
  [517,524,525,532,2],[514,524,526,530,1],[514,523,526,531,0],[519,522,523,539,2],[507,508,522,539,0],[484,504,508,513,0],[479,480,504,508,0],[440,443,480,483,0],
  [436,443,455,461,1],[443,444,455,463,0],[441,444,459,462,1],[443,450,458,473,0],[430,447,449,457,0],[421,446,454,467,1],[448,454,466,477,1],[450,458,466,471,0],
  [444,458,458,465,2],[440,443,458,462,0],[426,428,443,445,0],[406,419,428,432,0],[415,419,443,459,1],[429,443,453,457,1],[418,426,453,458,0],[420,426,427,447,2],
  [406,420,426,433,0],[414,420,431,435,1],[417,420,431,442,0],[416,420,432,438,1],[384,384,415,421,0],[350,353,384,387,0],[295,298,353,356,0],[246,291,298,317,0],
  [254,259,291,299,0],[217,218,259,262,0],[166,182,218,226,0],[177,182,191,214,1]
];
const hourly = [
  [776,786,798,799,0],[776,786,788,790,1],[768,778,788,789,0],[765,771,778,782,0],[758,759,763,775,0],[747,759,760,775,2],[751,755,759,763,0],[751,755,765,769,1],
  [762,765,787,793,1],[784,787,795,797,1],[785,795,795,798,2],[790,795,805,809,1],[799,803,805,817,0],[800,803,891,904,1],[853,856,891,894,0],[834,847,858,864,0],
  [841,847,868,869,1],[859,867,877,884,1],[837,840,877,884,0],[828,841,852,866,1],[850,851,879,890,1],[870,879,901,918,1],[888,901,907,914,1],[885,889,907,917,0],
  [885,890,894,900,1],[884,893,898,899,1],[885,892,898,906,0],[890,892,898,900,1],[892,892,896,898,0],[890,892,893,898,2],[891,893,893,902,2],[866,868,893,896,0],
  [863,868,876,884,1],[866,869,875,878,0],[856,865,868,870,0],[864,865,871,874,1],[863,868,871,880,0],[864,868,906,913,1],[895,906,945,947,1],[923,938,945,951,0],
  [916,930,938,940,0],[915,927,930,943,0],[918,926,953,956,1],[935,941,953,955,0],[932,941,948,964,1],[943,948,982,995,1],[963,970,982,987,0],[961,970,970,978,2],
  [966,969,987,990,1],[981,987,990,997,1],[986,990,991,1000,2],[991,991,1006,1006,1],[998,1000,1001,1005,2],[989,990,999,1005,0],[986,990,993,994,1],[987,992,993,1006,2],
  [987,987,992,1003,0],[978,988,1006,1007,1],[991,996,1006,1007,0],[982,983,996,1001,0],[976,982,983,987,2],[980,982,1025,1032,1],[1013,1021,1025,1074,0],[1018,1020,1072,1076,1],
  [1024,1035,1072,1076,0],[1022,1035,1039,1050,1],[1039,1039,1076,1083,1],[1074,1076,1118,1135,1],[1109,1118,1122,1145,1]
];

function draw(id, candles, base, price, grid) {
  const rect = (x, y, w, h, fill) => `<rect x="${x}" y="${y}" width="${w}" height="${h}" fill="${fill}"/>`;
  let out = `<rect x="2" width="100%" height="100%" fill="url(#vgrid)"/><rect width="100%" height="100%" fill="url(#${grid})"/>`;
  out += rect(0, price - base, '100%', 1, '#778899');
  candles.forEach(([high, top, bottom, low, kind], i) => {
    const x = 16 * i;
    out += rect(x, high - base, 1, low - high + 1, '#0f0');
    out += rect(x - 5, top - base, 11, bottom - top + 1, '#0f0');
    if (kind < 2) out += rect(x - 4, top - base + 1, 9, Math.max(1, bottom - top - 1), kind ? '#fff' : '#000');
  });
  document.getElementById(id).innerHTML = out;
}

draw('weekly', weekly, 143, 191, 'hgrid1');
draw('hourly', hourly, 726, 1122, 'hgrid2');
```
